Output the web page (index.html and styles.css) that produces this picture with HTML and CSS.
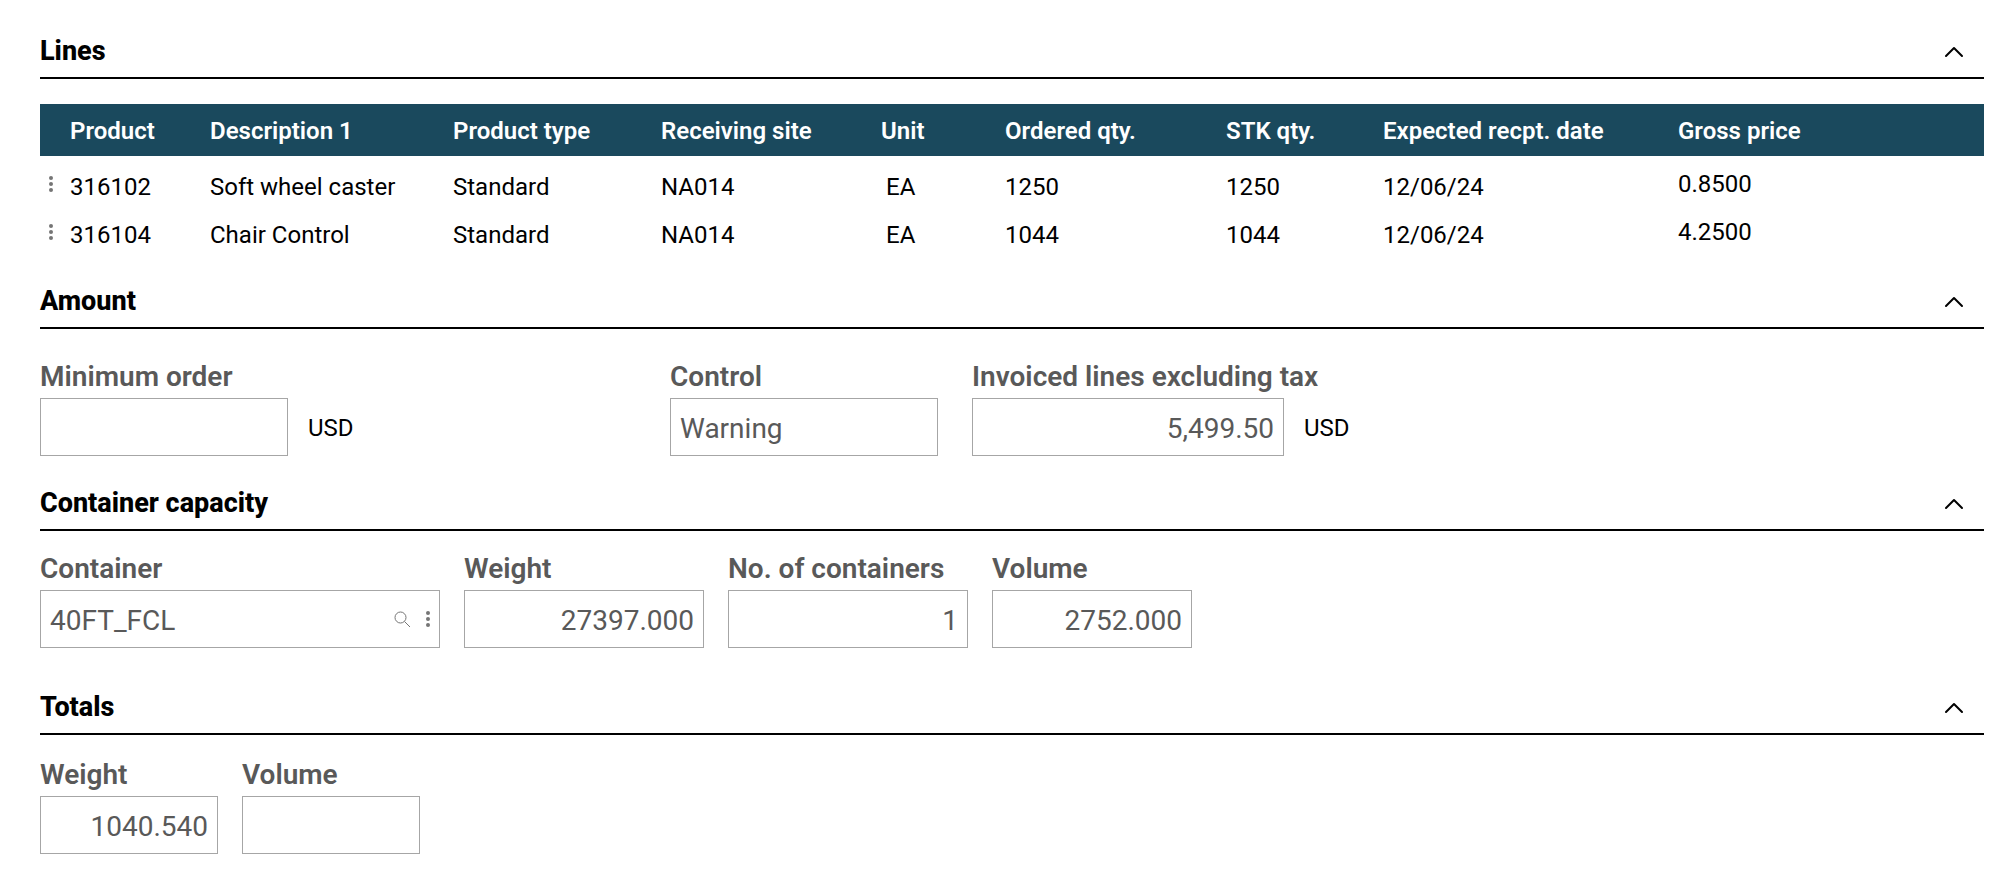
FILE: index.html
```html
<!DOCTYPE html>
<html lang="en">
  <head>
    <meta charset="UTF-8" />
    <title>Purchase order</title>
    <link rel="stylesheet" href="styles.css">
  </head>
  <body>
    <!-- Lines -->
    <section class="section lines">
      <div class="section-header">
        <h2>Lines</h2>
        <button class="toggle" type="button" aria-label="Collapse Lines">
          <svg width="20" height="12" viewBox="0 0 20 12"><path d="M2 10 L10 2 L18 10" /></svg>
        </button>
      </div>
      <table>
        <colgroup>
          <col class="col-menu" />
          <col class="col-product" />
          <col class="col-description" />
          <col class="col-type" />
          <col class="col-site" />
          <col class="col-unit" />
          <col class="col-ordered" />
          <col class="col-stk" />
          <col class="col-date" />
          <col />
        </colgroup>
        <thead>
          <tr>
            <th></th>
            <th>Product</th>
            <th>Description 1</th>
            <th>Product type</th>
            <th>Receiving site</th>
            <th>Unit</th>
            <th>Ordered qty.</th>
            <th>STK qty.</th>
            <th>Expected recpt. date</th>
            <th>Gross price</th>
          </tr>
        </thead>
        <tbody>
          <tr>
            <td class="menu">
              <button class="dots" type="button" aria-label="Line actions">
                <svg width="6" height="16" viewBox="0 0 6 16"><circle cx="3" cy="2" r="2" /><circle cx="3" cy="8" r="2" /><circle cx="3" cy="14" r="2" /></svg>
              </button>
            </td>
            <td>316102</td>
            <td>Soft wheel caster</td>
            <td>Standard</td>
            <td>NA014</td>
            <td class="unit">EA</td>
            <td>1250</td>
            <td>1250</td>
            <td>12/06/24</td>
            <td class="price">0.8500</td>
          </tr>
          <tr>
            <td class="menu">
              <button class="dots" type="button" aria-label="Line actions">
                <svg width="6" height="16" viewBox="0 0 6 16"><circle cx="3" cy="2" r="2" /><circle cx="3" cy="8" r="2" /><circle cx="3" cy="14" r="2" /></svg>
              </button>
            </td>
            <td>316104</td>
            <td>Chair Control</td>
            <td>Standard</td>
            <td>NA014</td>
            <td class="unit">EA</td>
            <td>1044</td>
            <td>1044</td>
            <td>12/06/24</td>
            <td class="price">4.2500</td>
          </tr>
        </tbody>
      </table>
    </section>

    <!-- Amount -->
    <section class="section amount">
      <div class="section-header">
        <h2>Amount</h2>
        <button class="toggle" type="button" aria-label="Collapse Amount">
          <svg width="20" height="12" viewBox="0 0 20 12"><path d="M2 10 L10 2 L18 10" /></svg>
        </button>
      </div>
      <div class="fields">
        <div class="field field-minimum">
          <label for="minimum-order">Minimum order</label>
          <div class="row">
            <input class="number" type="text" id="minimum-order" />
            <span class="currency">USD</span>
          </div>
        </div>
        <div class="field field-control">
          <label for="control">Control</label>
          <input type="text" id="control" value="Warning" />
        </div>
        <div class="field field-invoiced">
          <label for="invoiced-lines">Invoiced lines excluding tax</label>
          <div class="row">
            <input class="number" type="text" id="invoiced-lines" value="5,499.50" />
            <span class="currency">USD</span>
          </div>
        </div>
      </div>
    </section>

    <!-- Container capacity -->
    <section class="section capacity">
      <div class="section-header">
        <h2>Container capacity</h2>
        <button class="toggle" type="button" aria-label="Collapse Container capacity">
          <svg width="20" height="12" viewBox="0 0 20 12"><path d="M2 10 L10 2 L18 10" /></svg>
        </button>
      </div>
      <div class="fields">
        <div class="field field-container">
          <label for="container">Container</label>
          <div class="lookup">
            <input type="text" id="container" value="40FT_FCL" />
            <button class="search" type="button" aria-label="Search container">
              <svg width="17" height="17" viewBox="0 0 17 17"><circle cx="6.5" cy="6.5" r="5.5" /><path d="M10.5 10.5 L16 16" /></svg>
            </button>
            <button class="dots" type="button" aria-label="Container actions">
              <svg width="6" height="16" viewBox="0 0 6 16"><circle cx="3" cy="2" r="2" /><circle cx="3" cy="8" r="2" /><circle cx="3" cy="14" r="2" /></svg>
            </button>
          </div>
        </div>
        <div class="field field-weight">
          <label for="weight">Weight</label>
          <input class="number" type="text" id="weight" value="27397.000" />
        </div>
        <div class="field field-count">
          <label for="container-count">No. of containers</label>
          <input class="number" type="text" id="container-count" value="1" />
        </div>
        <div class="field field-volume">
          <label for="volume">Volume</label>
          <input class="number" type="text" id="volume" value="2752.000" />
        </div>
      </div>
    </section>

    <!-- Totals -->
    <section class="section totals">
      <div class="section-header">
        <h2>Totals</h2>
        <button class="toggle" type="button" aria-label="Collapse Totals">
          <svg width="20" height="12" viewBox="0 0 20 12"><path d="M2 10 L10 2 L18 10" /></svg>
        </button>
      </div>
      <div class="fields">
        <div class="field field-total">
          <label for="total-weight">Weight</label>
          <input class="number" type="text" id="total-weight" value="1040.540" />
        </div>
        <div class="field field-total">
          <label for="total-volume">Volume</label>
          <input class="number" type="text" id="total-volume" />
        </div>
      </div>
    </section>
  </body>
</html>
```
FILE: styles.css
```css
* {
  box-sizing: border-box;
}
body {
  margin: 0;
  padding: 35px 24px 24px 40px;
  font-family: Roboto, "Liberation Sans", sans-serif;
  font-size: 24px;
  line-height: 32px;
  color: #000;
  background-color: #fff;
}
button {
  padding: 0;
  border: none;
  background: none;
  cursor: pointer;
}
svg {
  display: block;
}

/* sections */
.section-header {
  display: flex;
  justify-content: space-between;
  align-items: center;
  padding-right: 20px;
  padding-bottom: 10px;
  border-bottom: 2px solid #000;
}
h2 {
  margin: 0;
  font-size: 27px;
  font-weight: 800;
}
.toggle {
  padding-top: 2px;
}
.toggle path {
  fill: none;
  stroke: #000;
  stroke-width: 2;
  stroke-linecap: round;
  stroke-linejoin: round;
}
.lines {
  margin-bottom: 26px;
}
.amount {
  margin-bottom: 31px;
}
.capacity {
  margin-bottom: 43px;
}

/* table */
table {
  width: 100%;
  margin-top: 25px;
  table-layout: fixed;
  border-collapse: collapse;
}
.col-menu {
  width: 30px;
}
.col-product {
  width: 140px;
}
.col-description {
  width: 243px;
}
.col-type {
  width: 208px;
}
.col-site {
  width: 220px;
}
.col-unit {
  width: 124px;
}
.col-ordered {
  width: 221px;
}
.col-stk {
  width: 157px;
}
.col-date {
  width: 295px;
}
th,
td {
  height: 48px;
  padding: 0;
  text-align: left;
  white-space: nowrap;
}
th {
  height: 52px;
  padding-top: 2px;
  font-weight: 600;
  color: #fff;
  background-color: #1a495d;
}
tbody::before {
  content: "";
  display: block;
  height: 7px;
}
.menu {
  padding: 0 0 6px 8px;
}
.unit {
  padding-left: 5px;
}
.price {
  padding-bottom: 6px;
}
.dots circle {
  fill: #757575;
}

/* fields */
.fields {
  display: flex;
  gap: 24px;
  padding-top: 22px;
}
.amount .fields {
  gap: 34px;
  padding-top: 32px;
}
.totals .fields {
  padding-top: 24px;
}
.field {
  display: flex;
  flex-direction: column;
  gap: 5px;
}
label {
  font-size: 28px;
  font-weight: 600;
  color: #595959;
  white-space: nowrap;
}
input {
  width: 100%;
  height: 58px;
  padding: 2px 9px 0;
  border: 1px solid #a6a6a6;
  font-family: inherit;
  font-size: 28px;
  color: #595959;
  background-color: #fff;
}
.number {
  text-align: right;
}
.row {
  display: flex;
  align-items: center;
  gap: 20px;
}
.currency {
  padding-top: 2px;
}
.field-minimum {
  width: 596px;
}
.field-minimum input {
  width: 248px;
}
.field-control {
  width: 268px;
}
.field-invoiced input {
  width: 312px;
}
.field-container {
  width: 400px;
}
.field-weight,
.field-count {
  width: 240px;
}
.field-volume {
  width: 200px;
}
.field-total {
  width: 178px;
}
.lookup {
  display: flex;
  align-items: center;
  gap: 14px;
  padding-right: 8px;
  border: 1px solid #a6a6a6;
}
.lookup input {
  flex: 1;
  width: 0;
  height: 56px;
  border: none;
}
.search circle,
.search path {
  fill: none;
  stroke: #757575;
}
```
